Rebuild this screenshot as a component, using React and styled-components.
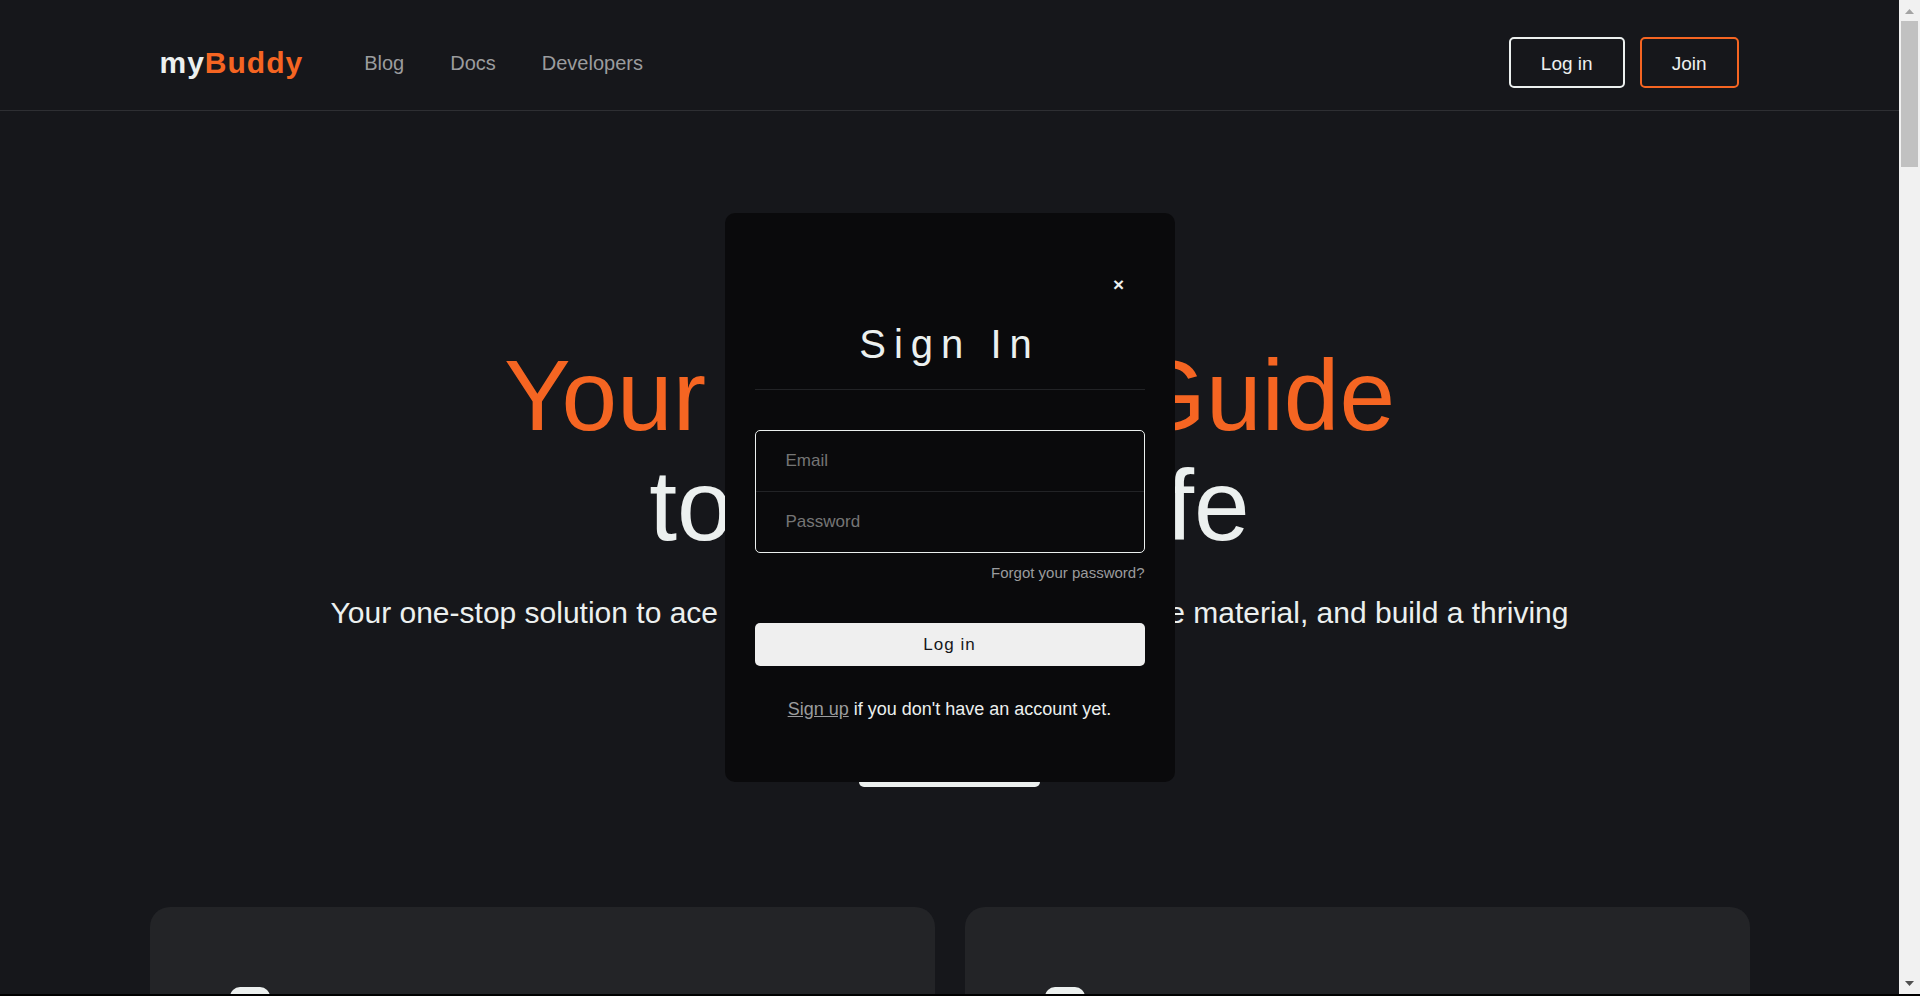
import React from "react";
import styled, { createGlobalStyle } from "styled-components";

const GlobalStyle = createGlobalStyle`
  * { box-sizing: border-box; }
  body {
    margin: 0;
    background: #000;
    color: #ecf0ef;
    font-family: "Liberation Sans", Arial, sans-serif;
  }
  button, input { font-family: inherit; }
  h1, h2, p { margin: 0; font-weight: 400; }
`;

const Screen = styled.div`
  position: relative;
  display: flex;
  height: 100vh;
  border-bottom: 2px solid #000;
  overflow: hidden;
`;

const Page = styled.div`
  flex: 1;
  min-width: 0;
  overflow: hidden;
  background: #16171b;
`;

const Header = styled.header`
  padding: 37px 0 22px;
  border-bottom: 1px solid #2e2f33;
`;

const Container = styled.div`
  max-width: 1600px;
  margin: 0 auto;
`;

const HeaderRow = styled(Container)`
  display: flex;
  align-items: center;
  padding: 0 11px 0 10px;
`;

const Logo = styled.a`
  color: #ecf0ef;
  font-size: 30px;
  font-weight: 700;
  letter-spacing: 1px;
  text-decoration: none;
  margin-right: 61px;

  span { color: #f56522; }
`;

const Nav = styled.nav`
  display: flex;
  gap: 46px;
  flex: 1;
  padding-top: 2px;
`;

const NavLink = styled.a`
  color: #9b9c9e;
  font-size: 20px;
  text-decoration: none;
`;

const Actions = styled.div`
  display: flex;
  gap: 15px;
`;

const OutlineButton = styled.button`
  height: 51px;
  padding: 2px 30px 0;
  background: transparent;
  border: 2px solid ${(p) => (p.$accent ? "#f56522" : "#ecf0ef")};
  border-radius: 5px;
  color: #ecf0ef;
  font-size: 19px;
`;

const Hero = styled.section`
  display: flex;
  flex-direction: column;
  align-items: center;
  padding: 229px 0 120px;
  text-align: center;
`;

const HeroTitle = styled.h1`
  font-size: 100px;
  line-height: 110px;

  span { color: #f56522; }
`;

const HeroText = styled.p`
  max-width: 1300px;
  margin-top: 35px;
  font-size: 30px;
  line-height: 36px;
`;

const HeroButton = styled.button`
  width: 181px;
  height: 57px;
  margin-top: 63px;
  border: 0;
  border-radius: 5px;
  background: #ecf0ef;
  color: #16171b;
  font-size: 19px;
`;

const Cards = styled(Container)`
  display: grid;
  grid-template-columns: 1fr 1fr;
  gap: 30px;
`;

const Card = styled.article`
  min-height: 400px;
  padding: 80px;
  border-radius: 20px;
  background: #232427;
`;

const CardIcon = styled.div`
  width: 40px;
  height: 40px;
  border-radius: 10px;
  background: #ecf0ef;
`;

const Scrollbar = styled.div`
  display: flex;
  flex-direction: column;
  align-items: center;
  width: 21px;
  background: #f1f1f1;
`;

const ScrollArrow = styled.svg`
  width: 21px;
  height: 21px;
  fill: ${(p) => (p.$dim ? "#a3a3a3" : "#505050")};
`;

const ScrollTrack = styled.div`
  flex: 1;
`;

const ScrollThumb = styled.div`
  width: 17px;
  height: 146px;
  background: #c1c1c1;
`;

const Overlay = styled.div`
  position: absolute;
  inset: 0 21px 0 0;
  display: flex;
  align-items: center;
  justify-content: center;
`;

const Modal = styled.div`
  display: flex;
  flex-direction: column;
  width: 450px;
  padding: 50px 30px 62px;
  border-radius: 10px;
  background: #0a0a0c;
`;

const CloseButton = styled.button`
  align-self: flex-end;
  width: 52px;
  height: 44px;
  padding: 0;
  border: 0;
  background: transparent;
  color: #ecf0ef;
  font-size: 19px;
  font-weight: 700;
`;

const ModalTitle = styled.h2`
  margin-top: 14px;
  padding-bottom: 22px;
  border-bottom: 1px solid #222326;
  font-size: 40px;
  line-height: 46px;
  letter-spacing: 8px;
  text-align: center;
`;

const Form = styled.form`
  display: flex;
  flex-direction: column;
  margin-top: 40px;
`;

const Fields = styled.div`
  border: 1px solid #ecf0ef;
  border-radius: 5px;
  overflow: hidden;
`;

const Field = styled.input`
  display: block;
  width: 100%;
  height: ${(p) => (p.$divided ? 61 : 60)}px;
  padding: 0 30px;
  border: 0;
  border-bottom: ${(p) => (p.$divided ? "1px solid #222326" : "0")};
  background: transparent;
  color: #ecf0ef;
  font-size: 17px;

  &::placeholder { color: #757575; opacity: 1; }
`;

const ForgotLink = styled.a`
  align-self: flex-end;
  margin-top: 10px;
  color: #9b9c9e;
  font-size: 15px;
  line-height: 20px;
  text-decoration: none;
`;

const SubmitButton = styled.button`
  height: 43px;
  margin-top: 40px;
  padding: 2px 0 0;
  border: 0;
  border-radius: 5px;
  background: #efefef;
  color: #16171b;
  font-size: 17px;
  letter-spacing: 1px;
`;

const SignUpText = styled.p`
  margin-top: 32px;
  font-size: 18px;
  line-height: 22px;
  text-align: center;

  a { color: #9b9c9e; }
`;

export default function App() {
  return (
    <>
      <GlobalStyle />
      <Screen>
        <Page>
          <Header>
            <HeaderRow>
              <Logo href="#home">my<span>Buddy</span></Logo>
              <Nav>
                <NavLink href="#blog">Blog</NavLink>
                <NavLink href="#docs">Docs</NavLink>
                <NavLink href="#developers">Developers</NavLink>
              </Nav>
              <Actions>
                <OutlineButton type="button">Log in</OutlineButton>
                <OutlineButton type="button" $accent>Join</OutlineButton>
              </Actions>
            </HeaderRow>
          </Header>
          <Hero>
            <HeroTitle>
              <span>Your Ultimate Guide</span>
              <br />
              to Bitsian Life
            </HeroTitle>
            <HeroText>
              Your one-stop solution to ace your exams, access quality course
              material, and build a thriving community
            </HeroText>
            <HeroButton type="button" aria-label="Get started" />
          </Hero>
          <Cards>
            <Card><CardIcon /></Card>
            <Card><CardIcon /></Card>
          </Cards>
        </Page>
        <Scrollbar aria-hidden="true">
          <ScrollArrow $dim viewBox="0 0 21 21"><path d="M6 14h9l-4.500-5z" /></ScrollArrow>
          <ScrollTrack><ScrollThumb /></ScrollTrack>
          <ScrollArrow viewBox="0 0 21 21"><path d="M6 8h9l-4.500 5z" /></ScrollArrow>
        </Scrollbar>
        <Overlay>
          <Modal role="dialog" aria-modal="true" aria-labelledby="sign-in-title">
            <CloseButton type="button" aria-label="Close">×</CloseButton>
            <ModalTitle id="sign-in-title">Sign In</ModalTitle>
            <Form onSubmit={(e) => e.preventDefault()}>
              <Fields>
                <Field $divided type="email" placeholder="Email" aria-label="Email" />
                <Field type="password" placeholder="Password" aria-label="Password" />
              </Fields>
              <ForgotLink href="#forgot">Forgot your password?</ForgotLink>
              <SubmitButton type="submit">Log in</SubmitButton>
            </Form>
            <SignUpText>
              <a href="#signup">Sign up</a> if you don't have an account yet.
            </SignUpText>
          </Modal>
        </Overlay>
      </Screen>
    </>
  );
}
